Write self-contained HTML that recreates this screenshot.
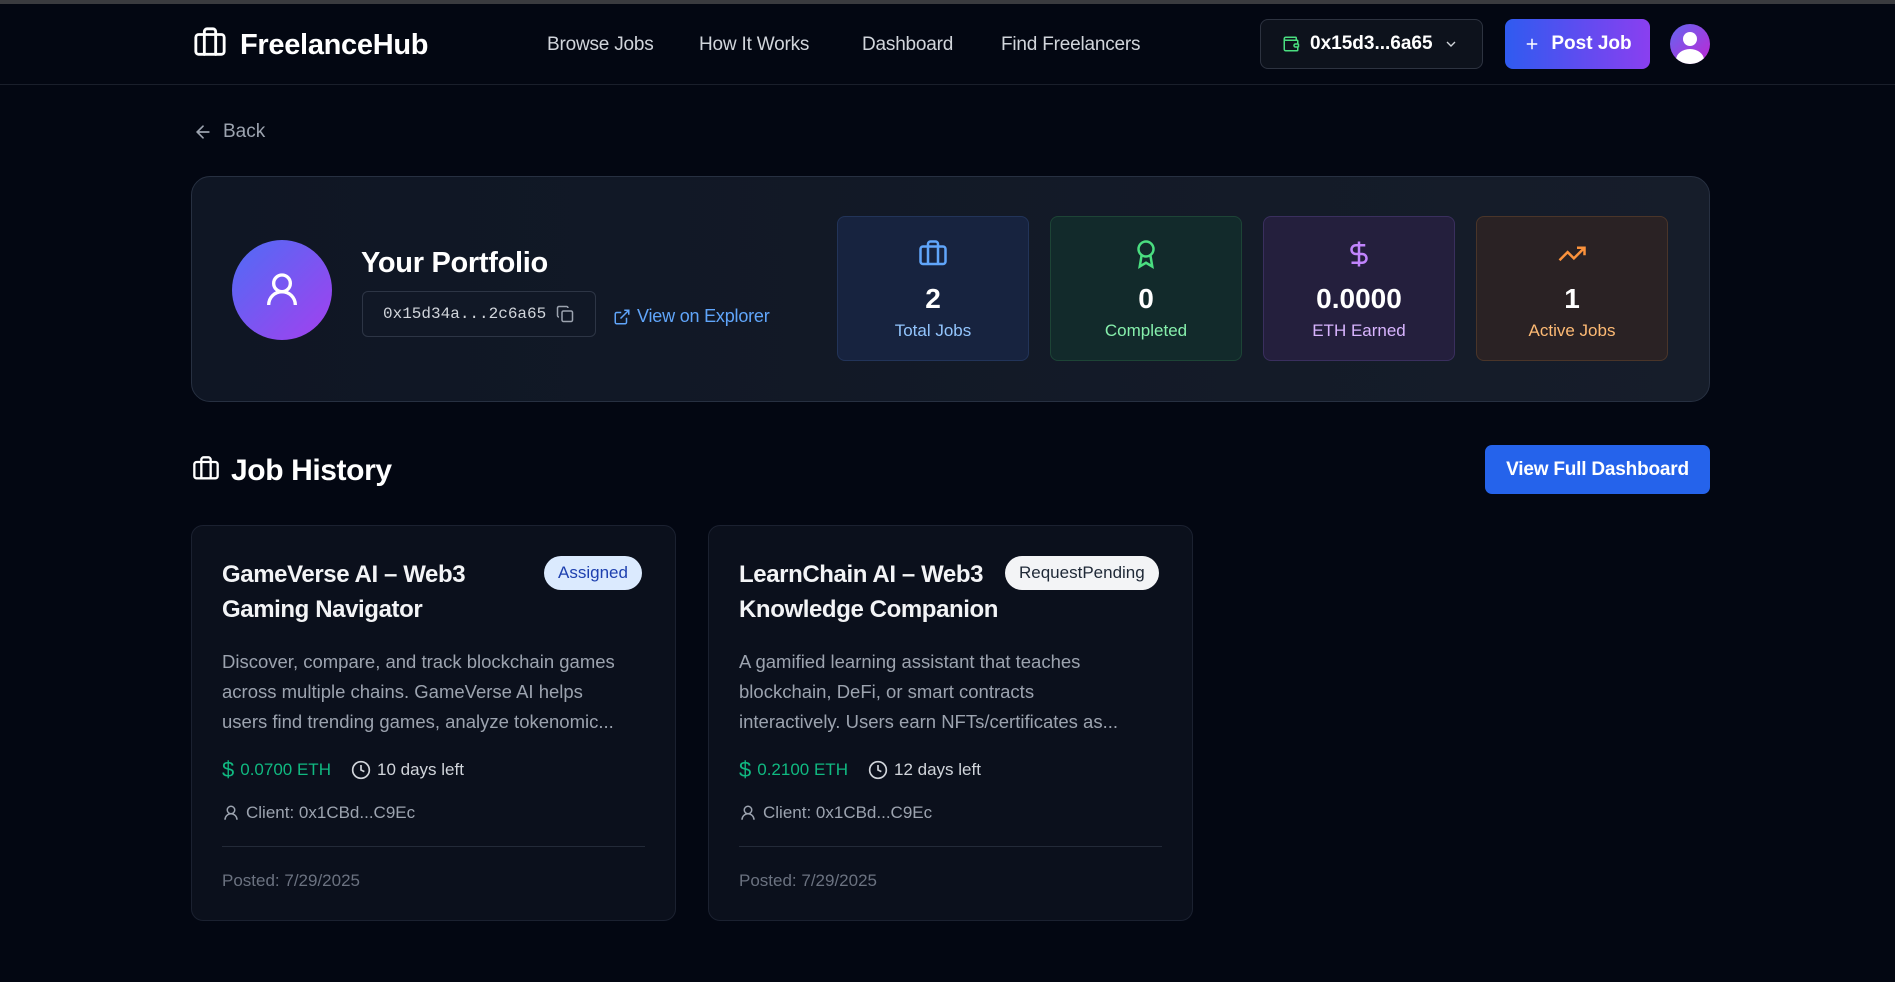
<!DOCTYPE html>
<html><head><meta charset="utf-8"><style>
*{box-sizing:border-box;margin:0;padding:0}
body{width:1895px;height:982px;background:#030712;font-family:"Liberation Sans",sans-serif;color:#fff;position:relative;overflow:hidden}
.a{position:absolute}
.topline{left:0;top:0;width:1895px;height:4px;background:#3a3b3f}
.nav{left:0;top:4px;width:1895px;height:81px;border-bottom:1px solid #1a1f2b}
.navl{font-size:19px;color:#d1d5db;top:34px;letter-spacing:-0.2px}
svg{display:block}
.stat{top:216px;width:192px;height:145px;border-radius:8px;border:1px solid}
.stat .ic{position:absolute;left:0;right:0;top:22px;display:flex;justify-content:center}
.val{position:absolute;left:0;right:0;top:66px;text-align:center;font-size:28px;font-weight:bold;color:#fff}
.lab{position:absolute;left:0;right:0;top:104px;text-align:center;font-size:17px}
.card{top:525px;width:485px;height:396px;border-radius:12px;background:#0b101c;border:1px solid #1b2130}
.card .t{position:absolute;left:30px;top:31px;font-size:24px;font-weight:bold;line-height:35px;color:#f3f4f6;width:300px;letter-spacing:-0.4px}
.card .d{position:absolute;left:30px;top:121px;font-size:18.5px;line-height:30px;color:#9ca3af;width:396px}
.card .p{position:absolute;left:30px;top:231px;font-size:17px;display:flex;align-items:center;gap:6px}
.card .c{position:absolute;left:30px;top:277px;font-size:17px;color:#9ca3af;display:flex;align-items:center;gap:6px}
.card .hr{position:absolute;left:30px;right:30px;top:320px;border-top:1px solid #232a38}
.card .po{position:absolute;left:30px;top:345px;font-size:17px;color:#6b7280}
.badge{position:absolute;top:30px;height:34px;border-radius:17px;font-size:17px;line-height:34px;padding:0 14px}
</style></head><body>
<div class="a topline"></div>
<div class="a nav"></div>
<div class="a" style="left:192px;top:26px"><svg width="36" height="34" viewBox="0 0 24 24" fill="none" stroke="#fff" stroke-width="2" stroke-linecap="round" stroke-linejoin="round"><path d="M16 20V4a2 2 0 0 0-2-2h-4a2 2 0 0 0-2 2v16"/><rect x="2" y="6" width="20" height="14" rx="2"/></svg></div>
<div class="a" style="left:240px;top:29px;font-size:29px;font-weight:bold;letter-spacing:-0.3px">FreelanceHub</div>
<div class="a navl" style="left:547px">Browse Jobs</div>
<div class="a navl" style="left:699px">How It Works</div>
<div class="a navl" style="left:862px">Dashboard</div>
<div class="a navl" style="left:1001px">Find Freelancers</div>
<div class="a" style="left:1260px;top:19px;width:223px;height:50px;border:1px solid #2d3340;border-radius:8px;background:#0d121c;display:flex;align-items:center;padding-left:21px;gap:10px;font-size:19px;font-weight:bold"><svg width="18" height="18" viewBox="0 0 24 24" fill="none" stroke="#4ade80" stroke-width="2"><path d="M19 7V4a1 1 0 0 0-1-1H5a2 2 0 0 0 0 4h15a1 1 0 0 1 1 1v4h-3a2 2 0 0 0 0 4h3a1 1 0 0 0 1-1v-2a1 1 0 0 0-1-1"/><path d="M3 5v14a2 2 0 0 0 2 2h15a1 1 0 0 0 1-1v-4"/></svg>0x15d3...6a65<svg width="16" height="16" viewBox="0 0 24 24" fill="none" stroke="#d1d5db" stroke-width="2"><path d="m6 9 6 6 6-6"/></svg></div>
<div class="a" style="left:1505px;top:19px;width:145px;height:50px;border-radius:8px;background:linear-gradient(90deg,#2f5bf0,#8a3ff0);display:flex;align-items:center;justify-content:center;gap:10px;font-size:19px;font-weight:bold"><svg width="18" height="18" viewBox="0 0 24 24" fill="none" stroke="#fff" stroke-width="2"><path d="M12 5v14M5 12h14"/></svg>Post Job</div>
<div class="a" style="left:1670px;top:24px;width:40px;height:40px;border-radius:50%;background:linear-gradient(135deg,#6366f1,#c026d3);overflow:hidden"><div class="a" style="left:13px;top:8px;width:14px;height:14px;border-radius:50%;background:#fff"></div><div class="a" style="left:6px;top:25px;width:28px;height:22px;border-radius:50%;background:#fff"></div></div>

<div class="a" style="left:193px;top:121px;display:flex;align-items:center;gap:10px;font-size:19px;color:#9ca3af"><svg width="20" height="20" viewBox="0 0 24 24" fill="none" stroke="#9ca3af" stroke-width="2" stroke-linecap="round"><path d="m12 19-7-7 7-7M19 12H5"/></svg>Back</div>

<div class="a" style="left:191px;top:176px;width:1519px;height:226px;border-radius:19px;border:1px solid #273041;background:linear-gradient(90deg,#0f1624,#161d2a)"></div>
<div class="a" style="left:232px;top:240px;width:100px;height:100px;border-radius:50%;background:linear-gradient(135deg,#4f6cf5,#a340ee);display:flex;align-items:center;justify-content:center"><svg width="40" height="40" viewBox="0 0 24 24" fill="none" stroke="#fff" stroke-width="2"><circle cx="12" cy="8" r="5"/><path d="M20 21a8 8 0 0 0-16 0"/></svg></div>
<div class="a" style="left:361px;top:247px;font-size:29px;font-weight:bold;letter-spacing:-0.3px">Your Portfolio</div>
<div class="a" style="left:362px;top:291px;width:234px;height:46px;border:1px solid #2d3545;border-radius:6px;background:#111826;display:flex;align-items:center;padding-left:20px;gap:10px;font-family:'Liberation Mono',monospace;font-size:16px;color:#d1d5db">0x15d34a...2c6a65<svg width="18" height="18" viewBox="0 0 24 24" fill="none" stroke="#9ca3af" stroke-width="2"><rect x="8" y="8" width="14" height="14" rx="2"/><path d="M4 16c-1.1 0-2-.9-2-2V4c0-1.1.9-2 2-2h10c1.1 0 2 .9 2 2"/></svg></div>
<div class="a" style="left:613px;top:306px;display:flex;align-items:center;gap:6px;font-size:18px;color:#60a5fa;letter-spacing:-0.2px"><svg width="18" height="18" viewBox="0 0 24 24" fill="none" stroke="#60a5fa" stroke-width="2"><path d="M15 3h6v6M10 14 21 3M18 13v6a2 2 0 0 1-2 2H5a2 2 0 0 1-2-2V8a2 2 0 0 1 2-2h6"/></svg>View on Explorer</div>

<div class="a stat" style="left:837px;background:#17233f;border-color:#223459"><div class="ic"><svg width="30" height="30" viewBox="0 0 24 24" fill="none" stroke="#60a5fa" stroke-width="2"><path d="M16 20V4a2 2 0 0 0-2-2h-4a2 2 0 0 0-2 2v16"/><rect x="2" y="6" width="20" height="14" rx="2"/></svg></div><div class="val">2</div><div class="lab" style="color:#93c5fd">Total Jobs</div></div>
<div class="a stat" style="left:1050px;background:#122a2b;border-color:#1d4436"><div class="ic"><svg width="30" height="30" viewBox="0 0 24 24" fill="none" stroke="#4ade80" stroke-width="2"><circle cx="12" cy="8" r="6"/><path d="M15.5 12.9 17 22l-5-3-5 3 1.5-9.1"/></svg></div><div class="val">0</div><div class="lab" style="color:#86efac">Completed</div></div>
<div class="a stat" style="left:1263px;background:#241f3d;border-color:#3a2f5e"><div class="ic"><svg width="30" height="30" viewBox="0 0 24 24" fill="none" stroke="#c084fc" stroke-width="2"><path d="M12 2v20M17 5H9.5a3.5 3.5 0 0 0 0 7h5a3.5 3.5 0 0 1 0 7H6"/></svg></div><div class="val">0.0000</div><div class="lab" style="color:#d8b4fe">ETH Earned</div></div>
<div class="a stat" style="left:1476px;background:#2a2224;border-color:#4a3529"><div class="ic"><svg width="30" height="30" viewBox="0 0 24 24" fill="none" stroke="#fb923c" stroke-width="2"><path d="m22 7-8.5 8.5-5-5L2 17M16 7h6v6"/></svg></div><div class="val">1</div><div class="lab" style="color:#fdba74">Active Jobs</div></div>

<div class="a" style="left:192px;top:455px"><svg width="28" height="28" viewBox="0 0 24 24" fill="none" stroke="#fff" stroke-width="2"><path d="M16 20V4a2 2 0 0 0-2-2h-4a2 2 0 0 0-2 2v16"/><rect x="2" y="6" width="20" height="14" rx="2"/></svg></div>
<div class="a" style="left:231px;top:454px;font-size:30px;font-weight:bold;letter-spacing:-0.4px">Job History</div>
<div class="a" style="left:1485px;top:445px;width:225px;height:49px;border-radius:7px;background:#2563eb;font-size:19px;font-weight:bold;line-height:49px;text-align:center;letter-spacing:-0.2px">View Full Dashboard</div>

<div class="a card" style="left:191px">
<div class="t">GameVerse AI – Web3 Gaming Navigator</div>
<div class="badge" style="left:352px;background:#dbeafe;color:#1e40af">Assigned</div>
<div class="d">Discover, compare, and track blockchain games across multiple chains. GameVerse AI helps users find trending games, analyze tokenomic...</div>
<div class="p"><span style="color:#10b981;font-size:22px">$</span><span style="color:#10b981">0.0700 ETH</span><svg style="margin-left:14px" width="20" height="20" viewBox="0 0 24 24" fill="none" stroke="#d1d5db" stroke-width="2"><circle cx="12" cy="12" r="10"/><path d="M12 6v6l4 2"/></svg><span style="color:#d1d5db">10 days left</span></div>
<div class="c"><svg width="18" height="18" viewBox="0 0 24 24" fill="none" stroke="#9ca3af" stroke-width="2"><circle cx="12" cy="8" r="5"/><path d="M20 21a8 8 0 0 0-16 0"/></svg>Client: 0x1CBd...C9Ec</div>
<div class="hr"></div>
<div class="po">Posted: 7/29/2025</div>
</div>
<div class="a card" style="left:708px">
<div class="t">LearnChain AI – Web3 Knowledge Companion</div>
<div class="badge" style="left:296px;background:#f3f4f6;color:#1f2937">RequestPending</div>
<div class="d">A gamified learning assistant that teaches blockchain, DeFi, or smart contracts interactively. Users earn NFTs/certificates as...</div>
<div class="p"><span style="color:#10b981;font-size:22px">$</span><span style="color:#10b981">0.2100 ETH</span><svg style="margin-left:14px" width="20" height="20" viewBox="0 0 24 24" fill="none" stroke="#d1d5db" stroke-width="2"><circle cx="12" cy="12" r="10"/><path d="M12 6v6l4 2"/></svg><span style="color:#d1d5db">12 days left</span></div>
<div class="c"><svg width="18" height="18" viewBox="0 0 24 24" fill="none" stroke="#9ca3af" stroke-width="2"><circle cx="12" cy="8" r="5"/><path d="M20 21a8 8 0 0 0-16 0"/></svg>Client: 0x1CBd...C9Ec</div>
<div class="hr"></div>
<div class="po">Posted: 7/29/2025</div>
</div>
</body></html>
